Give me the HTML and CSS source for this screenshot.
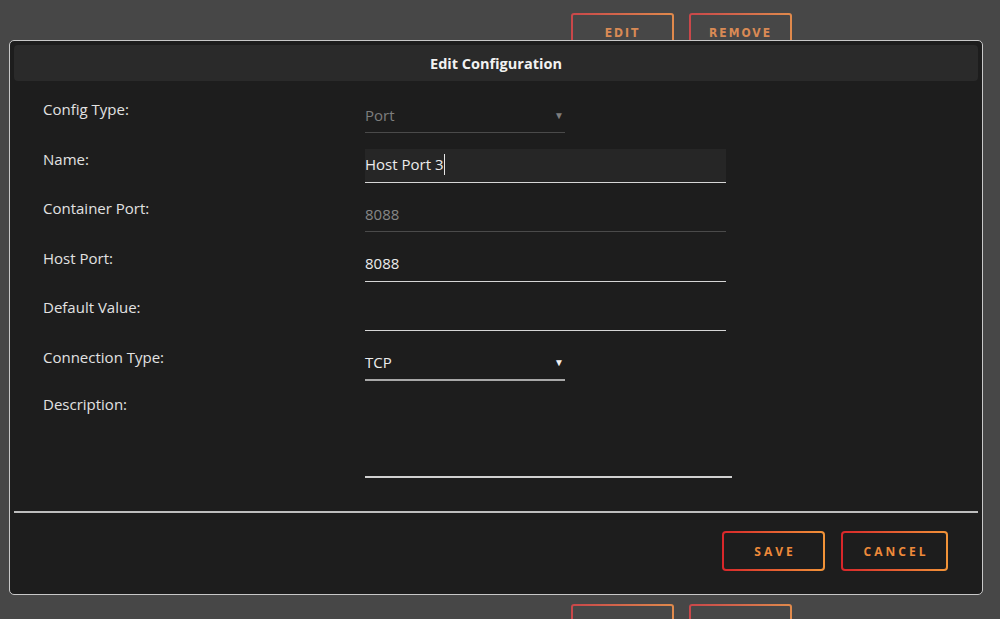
FILE: index.html
```html
<!DOCTYPE html>
<html lang="en">
<head>
    <meta charset="UTF-8">
    <meta name="viewport" content="width=device-width, initial-scale=1.0">
    <title>Edit Configuration</title>
    <link rel="stylesheet" href="styles.css">
</head>
<body>
    <div class="config-list">
        <div class="config-row first">
            <span class="config-value"></span>
            <button class="ghost-button">EDIT</button>
            <button class="ghost-button">REMOVE</button>
        </div>
        <div class="config-row last">
            <span class="config-value">8088</span>
            <button class="ghost-button">EDIT</button>
            <button class="ghost-button">REMOVE</button>
        </div>
    </div>

    <div class="modal">
        <div class="modal-header">Edit Configuration</div>

        <div class="modal-body">
            <div class="form-row">
                <label class="form-label">Config Type:</label>
                <div class="field select disabled">
                    <span>Port</span>
                    <span class="arrow">&#9660;</span>
                </div>
            </div>
            <div class="form-row">
                <label class="form-label">Name:</label>
                <div class="field text focused">
                    <span>Host Port 3</span><span class="caret"></span>
                </div>
            </div>
            <div class="form-row">
                <label class="form-label">Container Port:</label>
                <div class="field text disabled"><span>8088</span></div>
            </div>
            <div class="form-row">
                <label class="form-label">Host Port:</label>
                <div class="field text"><span>8088</span></div>
            </div>
            <div class="form-row">
                <label class="form-label">Default Value:</label>
                <div class="field text"></div>
            </div>
            <div class="form-row">
                <label class="form-label">Connection Type:</label>
                <div class="field select">
                    <span>TCP</span>
                    <span class="arrow">&#9660;</span>
                </div>
            </div>
            <div class="form-row">
                <label class="form-label desc">Description:</label>
                <div class="field textarea"></div>
            </div>
        </div>

        <div class="modal-footer">
            <button class="action-button">SAVE</button>
            <button class="action-button">CANCEL</button>
        </div>
    </div>
</body>
</html>
```

FILE: styles.css
```css
body {
    margin: 0;
    background: #474747;
    font-family: "Open Sans", "Liberation Sans", sans-serif;
    color: #e6e6e6;
    height: 619px;
    overflow: hidden;
}

/* Liste en arriere-plan */
.config-list {
    display: flex;
    flex-direction: column;
    gap: 551px;
    padding-top: 13px;
}

.config-row {
    display: flex;
    align-items: center;
    gap: 15px;
    height: 40px;
}

.config-value {
    width: 556px;
    padding-left: 185px;
    box-sizing: border-box;
    font-size: 15px;
    color: #ddd;
    margin-top: 26px;
}

.ghost-button {
    width: 103px;
    height: 40px;
    border: 2px solid transparent;
    border-radius: 3px;
    background: linear-gradient(#474747, #474747) padding-box,
                linear-gradient(90deg, #c9474a, #e08a4c) border-box;
    color: #d98a55;
    font-family: "DejaVu Sans Condensed", "Liberation Sans Narrow", sans-serif;
    font-size: 12px;
    font-weight: bold;
    letter-spacing: 2px;
    padding: 0;
}

/* Fenetre modale */
.modal {
    position: fixed;
    left: 9px;
    top: 40px;
    width: 974px;
    height: 555px;
    box-sizing: border-box;
    border: 1px solid #c8c8c8;
    border-radius: 5px;
    background: #1d1d1d;
    padding: 4px 4px 0;
}

.modal-header {
    height: 36px;
    background: #2a2a2a;
    border-radius: 4px;
    display: flex;
    align-items: center;
    justify-content: center;
    font-size: 14.5px;
    font-weight: bold;
    color: #f2f2f2;
}

.modal-body {
    padding: 18px 0 0 29px;
    display: flex;
    flex-direction: column;
    gap: 15.5px;
    border-bottom: 2px solid #bdbdbd;
    padding-bottom: 33px;
}

.form-row {
    display: flex;
    align-items: flex-start;
}

.form-label {
    width: 322px;
    font-size: 15px;
    line-height: 20px;
    color: #e2e2e2;
}

.form-label.desc {
    margin-top: -2px;
}

.field {
    height: 34px;
    box-sizing: border-box;
    display: flex;
    align-items: center;
    font-size: 15px;
    border-bottom: 1px solid #d6d6d6;
    color: #ececec;
    padding-bottom: 2px;
}

.field.text {
    width: 361px;
}

.field.focused {
    background: #262626;
}

.field.disabled {
    color: #878787;
    border-bottom-color: #4a4a4a;
}

.field.select {
    width: 200px;
    justify-content: space-between;
    border-bottom: 2px solid #a8a8a8;
}

.field.select.disabled {
    border-bottom: 1px solid #4a4a4a;
    color: #7e7e7e;
}

.arrow {
    font-size: 10px;
    margin-right: 1px;
    color: #f0f0f0;
}

.disabled .arrow {
    color: #7e7e7e;
}

.caret {
    display: inline-block;
    width: 1px;
    height: 21px;
    background: #e6e6e6;
    margin-left: 1px;
}

.field.textarea {
    width: 367px;
    height: 82px;
    border-bottom: 2px solid #d0d0d0;
}

.modal-footer {
    display: flex;
    justify-content: flex-end;
    gap: 16px;
    padding: 18px 30px 0 0;
}

.action-button {
    width: 103px;
    height: 40px;
    border: 2px solid transparent;
    border-radius: 4px;
    background: linear-gradient(#1d1d1d, #1d1d1d) padding-box,
                linear-gradient(90deg, #d8262a, #f29438) border-box;
    color: #ee8a3a;
    font-family: "Open Sans", "Liberation Sans", sans-serif;
    font-size: 12px;
    font-weight: bold;
    letter-spacing: 3px;
    padding: 0 0 0 3px;
    cursor: pointer;
}

.action-button:last-child {
    width: 107px;
}
```
